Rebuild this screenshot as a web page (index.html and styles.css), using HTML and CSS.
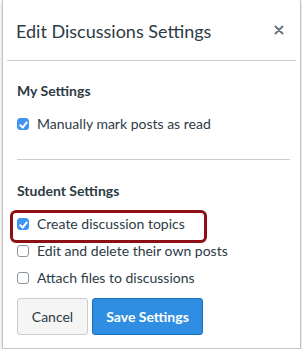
FILE: index.html
```html
<!DOCTYPE html>
<html lang="en">
<head>
    <meta charset="UTF-8">
    <title>Edit Discussions Settings</title>
    <link rel="stylesheet" href="styles.css">
</head>
<body>
    <div class="modal">
        <!-- Header -->
        <div class="modal-header">
            <h1 class="modal-title">Edit Discussions Settings</h1>
            <button class="close" aria-label="Close">
                <svg width="10" height="10" viewBox="0 0 10 10">
                    <path d="M1.5 1.5 L8.5 8.5 M8.5 1.5 L1.5 8.5" stroke="#6b7780" stroke-width="2" stroke-linecap="round"/>
                </svg>
            </button>
        </div>

        <div class="modal-body">
            <!-- My settings -->
            <div class="section">
                <h2 class="section-title">My Settings</h2>
                <label class="option">
                    <span class="box checked"></span>
                    Manually mark posts as read
                </label>
            </div>

            <!-- Student settings -->
            <div class="section last">
                <h2 class="section-title">Student Settings</h2>
                <label class="option highlight">
                    <span class="box checked"></span>
                    Create discussion topics
                </label>
                <label class="option">
                    <span class="box"></span>
                    Edit and delete their own posts
                </label>
                <label class="option">
                    <span class="box"></span>
                    Attach files to discussions
                </label>
            </div>

            <div class="actions">
                <button class="btn">Cancel</button>
                <button class="btn primary">Save Settings</button>
            </div>
        </div>
    </div>
</body>
</html>
```

FILE: styles.css
```css
* {
    margin: 0;
    padding: 0;
    box-sizing: border-box;
}

body {
    background: #fff;
    font-family: Lato, 'Open Sans', sans-serif;
    color: #2d3b45;
    padding-left: 2px;
}

.modal {
    width: 299px;
    height: 349px;
    border: 1px solid #c4c4c4;
    border-top: none;
    box-shadow: 0 2px 3px rgba(0, 0, 0, 0.25);
    background: #fff;
}

.modal-header {
    height: 61px;
    margin: 0 4px;
    padding: 0 11px 0 9px;
    border-bottom: 1px solid #c7cdd1;
    display: flex;
    align-items: center;
    justify-content: space-between;
}

.modal-title {
    font-size: 18px;
    font-weight: normal;
    padding-top: 1px;
}

.close {
    background: none;
    border: none;
    width: 12px;
    height: 14px;
    display: flex;
    align-items: center;
    justify-content: center;
}

.modal-body {
    padding: 0 10px 0 14px;
}

.section {
    padding: 21px 0 22px;
    border-bottom: 1px solid #c7cdd1;
}

.section.last {
    border-bottom: none;
    padding: 22px 0 7px;
}

.section-title {
    font-size: 14px;
    font-weight: bold;
    margin-bottom: 11px;
}

.option {
    display: flex;
    align-items: center;
    gap: 8px;
    height: 27px;
    font-size: 14px;
    position: relative;
}

.option.highlight::after {
    content: "";
    position: absolute;
    left: -7px;
    top: 0;
    width: 191px;
    height: 27px;
    border: 3px solid #8e0f13;
    border-radius: 6px;
}

.box {
    width: 12px;
    height: 12px;
    border: 1px solid #8b969e;
    border-radius: 3px;
    background: #fff;
    flex-shrink: 0;
    position: relative;
}

.box.checked {
    background: #4194f0;
    border-color: #4194f0;
}

.box.checked::after {
    content: "";
    position: absolute;
    left: 3px;
    top: 1px;
    width: 3px;
    height: 6px;
    border: solid #fff;
    border-width: 0 2px 2px 0;
    transform: rotate(40deg);
}

.actions {
    display: flex;
    gap: 4px;
}

.btn {
    width: 71px;
    height: 37px;
    font-family: Lato, sans-serif;
    font-size: 14px;
    color: #2d3b45;
    background: #f5f5f5;
    border: 1px solid #c7cdd1;
    border-radius: 3px;
    white-space: nowrap;
}

.btn.primary {
    width: 111px;
    background: #2f8ee2;
    border-color: #1a6fba;
    color: #fff;
    font-weight: bold;
}
```
